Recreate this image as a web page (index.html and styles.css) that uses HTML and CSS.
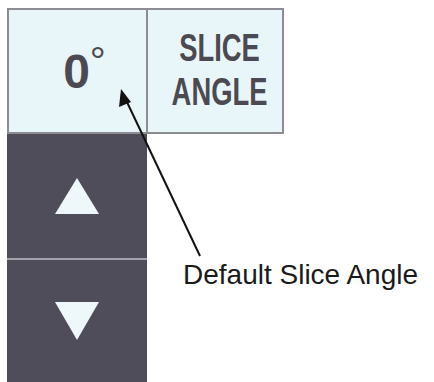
FILE: index.html
```html
<!DOCTYPE html>
<html lang="en">
<head>
    <meta charset="UTF-8">
    <meta name="viewport" content="width=device-width, initial-scale=1.0">
    <title>Slice Angle</title>
    <link rel="stylesheet" href="styles.css">
</head>
<body>
    <div class="panel">
        <div class="cell value">0<span class="deg">°</span></div>
        <div class="cell title"><span>SLICE<br>ANGLE</span></div>
        <div class="stepper">
            <button class="step">
                <svg width="44" height="36" viewBox="0 0 44 36"><polygon points="22,0 44,36 0,36"/></svg>
            </button>
            <button class="step">
                <svg width="44" height="38" viewBox="0 0 44 38"><polygon points="0,0 44,0 22,38"/></svg>
            </button>
        </div>
        <div class="callout">Default Slice Angle</div>
    </div>

    <svg class="pointer" width="434" height="382" viewBox="0 0 434 382">
        <line x1="200" y1="256" x2="126" y2="100" stroke="#111" stroke-width="2"/>
        <polygon points="121,89 119,107 131,102" fill="#111"/>
    </svg>
</body>
</html>
```

FILE: styles.css
```css
body {
    margin: 0;
    height: 382px;
    overflow: hidden;
    background: #fff;
    font-family: "Liberation Sans", Arial, sans-serif;
}
.panel {
    display: grid;
    grid-template-columns: 139px 138px 1fr;
    grid-template-rows: 126px auto;
    margin: 8px 0 0 7px;
}
.cell {
    display: flex;
    align-items: center;
    justify-content: center;
    background: #e9f6f9;
    border: 2px solid #8d8c93;
    color: #4b4a52;
    font-weight: bold;
}
.value {
    border-right: none;
    padding-left: 14px;
    font-size: 48px;
}
.deg {
    font-size: 40px;
    font-weight: normal;
    position: relative;
    top: -10px;
}
.title {
    padding-left: 8px;
    font-size: 38px;
    line-height: 1.15;
    text-align: center;
}
.title span {
    display: block;
    transform: scaleX(0.72);
}
.stepper {
    grid-column: 1;
    grid-row: 2;
    display: flex;
    flex-direction: column;
    width: 140px;
    background: #4f4d59;
}
.step {
    display: flex;
    align-items: center;
    justify-content: center;
    height: 124px;
    padding: 0;
    border: none;
    background: #4f4d59;
}
.step + .step {
    border-top: 2px solid #a3a2ac;
}
.step svg {
    fill: #eef8fb;
}
.callout {
    grid-column: 2 / 4;
    grid-row: 2;
    padding: 127px 0 0 37px;
    font-size: 28px;
    line-height: 1;
    color: #1a1a1a;
    white-space: nowrap;
}
.pointer {
    position: absolute;
    top: 0;
    left: 0;
}
```
